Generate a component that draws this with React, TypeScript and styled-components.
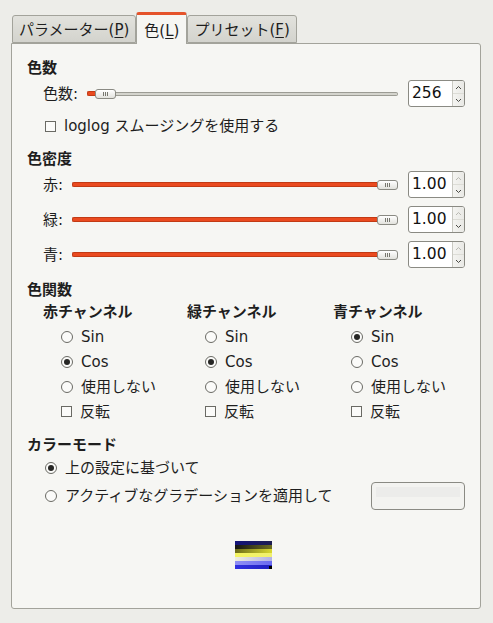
import React from 'react';
import styled, { createGlobalStyle } from 'styled-components';

const Global = createGlobalStyle`
  html, body { margin: 0; padding: 0; background: #edede9; }
  body {
    font-family: 'DejaVu Sans', 'Noto Sans CJK JP', sans-serif;
    font-size: 15px;
    color: #1e1e1e;
  }
`;

const Window = styled.div`
  width: 493px;
  height: 623px;
  box-sizing: border-box;
  padding: 12px 12px 14px 11px;
  display: flex;
  flex-direction: column;
`;

const TabBar = styled.div`
  display: flex;
  align-items: flex-end;
  height: 31px;
  padding-left: 1px;
  position: relative;
  z-index: 1;
`;

const Tab = styled.div<{ $active?: boolean }>`
  box-sizing: border-box;
  display: flex;
  align-items: center;
  padding: ${p => (p.$active ? '3px 7px 0' : '2px 6px 0')};
  height: ${p => (p.$active ? '32px' : '28px')};
  margin-bottom: ${p => (p.$active ? '-1px' : '0')};
  border: 1px solid #a3a39b;
  border-bottom: ${p => (p.$active ? 'none' : '1px solid #a3a39b')};
  border-top: ${p => (p.$active ? '3px solid #e5532b' : '1px solid #a3a39b')};
  border-radius: 3px 3px 0 0;
  background: ${p => (p.$active ? '#f6f6f3' : 'linear-gradient(#e2e2dd, #d3d3cd)')};
  white-space: nowrap;
  line-height: 20px;
`;

const Mn = styled.span`
  text-decoration: underline;
  text-underline-offset: 2px;
`;

const Panel = styled.div`
  flex: 1;
  box-sizing: border-box;
  border: 1px solid #a3a39b;
  border-radius: 0 3px 3px 3px;
  background: #f6f6f3;
  padding: 14px 15px 0 15px;
  display: flex;
  flex-direction: column;
`;

const Heading = styled.div<{ $mt?: number }>`
  font-weight: bold;
  line-height: 20px;
  margin-top: ${p => p.$mt ?? 0}px;
`;

const ScaleRow = styled.div<{ $mt?: number }>`
  display: flex;
  align-items: center;
  height: 27px;
  margin-left: 16px;
  margin-top: ${p => p.$mt ?? 0}px;
`;

const ScaleLabel = styled.div<{ $w: number }>`
  width: ${p => p.$w}px;
  flex: none;
  line-height: 20px;
`;

const Track = styled.div`
  flex: 1;
  display: flex;
  align-items: center;
  height: 10px;
  margin-right: 10px;
`;

const Fill = styled.div<{ $w?: number }>`
  box-sizing: border-box;
  height: 5px;
  background: #ea4a1f;
  border: 1px solid #c23a14;
  border-right: none;
  border-radius: 2px 0 0 2px;
  ${p => (p.$w != null ? `width: ${p.$w}px; flex: none;` : 'flex: 1;')}
`;

const Rest = styled.div`
  box-sizing: border-box;
  flex: 1;
  height: 4px;
  background: #d4d4cd;
  border: 1px solid #9c9c94;
  border-left: none;
  border-radius: 0 2px 2px 0;
`;

const Knob = styled.div`
  box-sizing: border-box;
  flex: none;
  width: 21px;
  height: 10px;
  border: 1px solid #8a8a83;
  border-radius: 3px;
  background: linear-gradient(#ffffff, #e2e2dd);
  display: flex;
  align-items: center;
  justify-content: center;
  gap: 1px;
`;

const Tick = styled.div`
  width: 1px;
  height: 4px;
  background: #77776f;
`;

const Spin = styled.div`
  box-sizing: border-box;
  flex: none;
  width: 57px;
  height: 27px;
  border: 1px solid #8a8a83;
  border-radius: 3px;
  background: #ffffff;
  display: flex;
  overflow: hidden;
`;

const SpinText = styled.div`
  flex: 1;
  padding-left: 3px;
  line-height: 25px;
  font-size: 15.5px;
  color: #111;
`;

const SpinButtons = styled.div`
  width: 11px;
  border-left: 1px solid #c9c9c2;
  background: linear-gradient(90deg, #f4f4f1, #e9e9e5);
  display: flex;
  flex-direction: column;
`;

const SpinHalf = styled.div`
  flex: 1;
  display: flex;
  align-items: center;
  justify-content: center;
  & + & { border-top: 1px solid #dcdcd6; }
`;

const Chevron: React.FC<{ up?: boolean; dim?: boolean }> = ({ up, dim }) => (
  <svg width="7" height="5" viewBox="0 0 7 5">
    <polyline
      points={up ? '1,4 3.5,1.5 6,4' : '1,1 3.5,3.5 6,1'}
      fill="none"
      stroke={dim ? '#b8b8b2' : '#4a4a46'}
      strokeWidth="1"
    />
  </svg>
);

const SpinBox: React.FC<{ value: string; atMax?: boolean }> = ({ value, atMax }) => (
  <Spin>
    <SpinText>{value}</SpinText>
    <SpinButtons>
      <SpinHalf><Chevron up dim={atMax} /></SpinHalf>
      <SpinHalf><Chevron /></SpinHalf>
    </SpinButtons>
  </Spin>
);

const KnobEl = () => (
  <Knob>
    <Tick />
    <Tick />
    <Tick />
  </Knob>
);

const OptionRow = styled.div<{ $indent: number; $mt?: number; $h?: number }>`
  display: flex;
  align-items: center;
  gap: 8px;
  margin-left: ${p => p.$indent}px;
  margin-top: ${p => p.$mt ?? 0}px;
  height: ${p => p.$h ?? 20}px;
  line-height: 20px;
  white-space: nowrap;
`;

const Box = styled.span`
  box-sizing: border-box;
  flex: none;
  width: 11px;
  height: 11px;
  border: 1px solid #6a6a64;
  background: #fbfbf9;
`;

const Circle = styled.span<{ $on?: boolean }>`
  box-sizing: border-box;
  flex: none;
  width: 12px;
  height: 12px;
  border: 1px solid #6a6a64;
  border-radius: 50%;
  background: #fbfbf9;
  display: flex;
  align-items: center;
  justify-content: center;
  &::after {
    content: '';
    width: 6px;
    height: 6px;
    border-radius: 50%;
    background: ${p => (p.$on ? '#262624' : 'transparent')};
  }
`;

const Channels = styled.div`
  display: grid;
  grid-template-columns: 144px 146px 1fr;
  margin-left: 16px;
  margin-top: 2px;
`;

const Channel = styled.div`
  display: flex;
  flex-direction: column;
`;

const ChannelHead = styled.div`
  font-weight: bold;
  line-height: 20px;
  height: 20px;
  margin-bottom: 2px;
`;

const ChannelOpt = styled(OptionRow)`
  height: 25px;
`;

const ModeRow = styled.div`
  display: flex;
  align-items: center;
  justify-content: space-between;
  height: 28px;
  margin-top: 4px;
`;

const GradButton = styled.div`
  box-sizing: border-box;
  width: 94px;
  height: 28px;
  border: 1px solid #8a8a83;
  border-radius: 4px;
  background: #f3f3f0;
  padding: 4px 4px;
  display: flex;
`;

const GradInner = styled.div`
  flex: 1;
  height: 10px;
  background: #ececea;
`;

const Preview = styled.div`
  margin-top: 31px;
  margin-left: 208px;
  width: 37px;
  height: 28px;
  line-height: 0;
`;

const stripes: [string, string][] = [
  ['#14147a', '#1c1c50'],
  ['#141414', '#6e6e20'],
  ['#6a6a18', '#d8d830'],
  ['#f4f460', '#f0f070'],
  ['#eeeedc', '#b0b0e8'],
  ['#9090f4', '#6a6af0'],
  ['#3030e0', '#2020c0'],
];

const PreviewArt = () => (
  <svg width="37" height="28" viewBox="0 0 37 28">
    <defs>
      {stripes.map(([a, b], i) => (
        <linearGradient key={i} id={`st${i}`} x1="0" x2="1" y1="0" y2="0">
          <stop offset="0" stopColor={a} />
          <stop offset="1" stopColor={b} />
        </linearGradient>
      ))}
    </defs>
    {stripes.map((_, i) => (
      <rect key={i} x="0" y={i * 4} width="37" height="4" fill={`url(#st${i})`} />
    ))}
    <rect x="34" y="25" width="3" height="3" fill="#000" />
  </svg>
);

const channels = [
  { name: '赤チャンネル', sel: 1 },
  { name: '緑チャンネル', sel: 1 },
  { name: '青チャンネル', sel: 0 },
];

export default function App() {
  return (
    <>
      <Global />
      <Window>
        <TabBar>
          <Tab>パラメーター(<Mn>P</Mn>)</Tab>
          <Tab $active>色(<Mn>L</Mn>)</Tab>
          <Tab>プリセット(<Mn>F</Mn>)</Tab>
        </TabBar>
        <Panel>
          <Heading>色数</Heading>
          <ScaleRow $mt={2}>
            <ScaleLabel $w={44}>色数:</ScaleLabel>
            <Track>
              <Fill $w={8} />
              <KnobEl />
              <Rest />
            </Track>
            <SpinBox value="256" />
          </ScaleRow>
          <OptionRow $indent={18} $mt={9}>
            <Box />
            <span>loglog スムージングを使用する</span>
          </OptionRow>

          <Heading $mt={13}>色密度</Heading>
          {['赤:', '緑:', '青:'].map((l, i) => (
            <ScaleRow key={l} $mt={i === 0 ? 2 : 8}>
              <ScaleLabel $w={29}>{l}</ScaleLabel>
              <Track>
                <Fill />
                <KnobEl />
              </Track>
              <SpinBox value="1.00" atMax />
            </ScaleRow>
          ))}

          <Heading $mt={12}>色関数</Heading>
          <Channels>
            {channels.map(c => (
              <Channel key={c.name}>
                <ChannelHead>{c.name}</ChannelHead>
                {['Sin', 'Cos', '使用しない'].map((o, i) => (
                  <ChannelOpt key={o} $indent={18}>
                    <Circle $on={c.sel === i} />
                    <span>{o}</span>
                  </ChannelOpt>
                ))}
                <ChannelOpt $indent={18}>
                  <Box />
                  <span>反転</span>
                </ChannelOpt>
              </Channel>
            ))}
          </Channels>

          <Heading $mt={11}>カラーモード</Heading>
          <OptionRow $indent={18} $mt={3}>
            <Circle $on />
            <span>上の設定に基づいて</span>
          </OptionRow>
          <ModeRow>
            <OptionRow $indent={18}>
              <Circle />
              <span>アクティブなグラデーションを適用して</span>
            </OptionRow>
            <GradButton>
              <GradInner />
            </GradButton>
          </ModeRow>
          <Preview>
            <PreviewArt />
          </Preview>
        </Panel>
      </Window>
    </>
  );
}
